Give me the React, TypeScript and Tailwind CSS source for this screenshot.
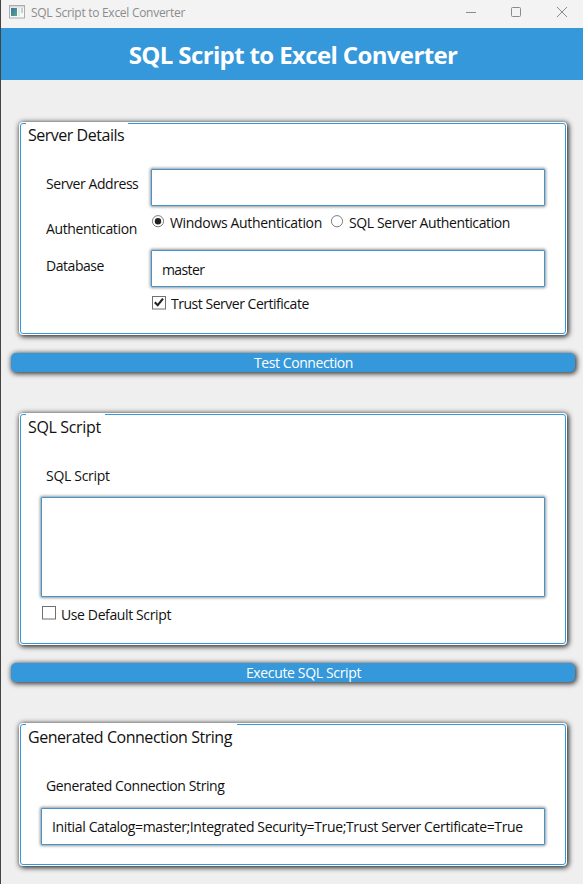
import type { ReactNode } from 'react';

const panelShadow = 'shadow-[1px_1px_5px_1px_rgba(0,0,0,0.8)]';
const fieldBox =
  'border border-[#3f96d2] bg-white rounded-[1px] shadow-[0_0_3px_1px_rgba(0,0,0,0.42)]';

function Panel({
  title,
  titleClass,
  className,
  children,
}: {
  title: string;
  titleClass: string;
  className: string;
  children: ReactNode;
}) {
  return (
    <section className={`ml-[18px] w-[548px] rounded-[4px] bg-white p-px ${panelShadow} ${className}`}>
      <div className="flex h-full w-[546px] flex-col rounded-[3px] border border-[#3498db]">
        <h2
          className={`-mt-px ml-[5px] h-[24px] shrink-0 whitespace-nowrap bg-white pl-[2px] text-[16px] ${titleClass}`}
        >
          {title}
        </h2>
        {children}
      </div>
    </section>
  );
}

function ActionButton({ label, className }: { label: string; className: string }) {
  return (
    <button
      type="button"
      className={`ml-[10px] flex h-[19px] w-[564px] shrink-0 items-center justify-center whitespace-nowrap rounded-[5px] bg-[#3498db] pl-[21px] text-[14px] leading-[19px] text-white shadow-[1px_1px_5px_1px_rgba(0,0,0,0.75)] ${className}`}
    >
      {label}
    </button>
  );
}

function Radio({ checked }: { checked?: boolean }) {
  return (
    <svg width="13" height="13" viewBox="0 0 13 13" className="shrink-0">
      <circle cx="6" cy="6.2" r="5.6" fill="#fff" stroke="#707070" strokeWidth="0.9" />
      {checked && <circle cx="6" cy="6.2" r="3.2" fill="#212121" />}
    </svg>
  );
}

function Check({ checked }: { checked?: boolean }) {
  return (
    <svg width="14" height="14" viewBox="0 0 14 14" className="shrink-0">
      <rect x="0.5" y="0.5" width="13" height="12.5" fill="#fff" stroke="#707070" />
      {checked && <path d="M2.8 6.2 L5.7 9.2 L11 2.6" fill="none" stroke="#212121" strokeWidth="2.1" />}
    </svg>
  );
}

export default function App() {
  return (
    <div className="flex h-[884px] w-[583px] flex-col overflow-hidden border-l border-[#444] bg-[#efefef] font-['Open_Sans','Noto_Sans',sans-serif] text-[14px] text-[#111]">
      <header className="flex h-[28px] shrink-0 items-start bg-[#f3f3f3]">
        <svg width="16" height="14" viewBox="0 0 16 14" className="mt-[5px] ml-[8px]">
          <defs>
            <linearGradient id="pane" x1="0" y1="0" x2="1" y2="1">
              <stop offset="0" stopColor="#3f6fa5" />
              <stop offset="1" stopColor="#58a982" />
            </linearGradient>
          </defs>
          <rect x="0.5" y="0.5" width="15" height="12.5" fill="#f8f8f8" stroke="#a9adb1" />
          <rect x="1" y="1" width="14" height="1.5" fill="#d5d8dc" />
          <rect x="2" y="3" width="6" height="8" fill="url(#pane)" />
          <rect x="9" y="3" width="2" height="8" fill="#e6e8ea" />
          <rect x="12" y="3" width="2" height="5" fill="#b9d5c6" />
        </svg>
        <span className="mt-[4px] ml-[6px] whitespace-nowrap text-[12px] leading-[18px] tracking-[-0.28px] text-[#8c8c8c]">
          SQL Script to Excel Converter
        </span>
        <svg width="104" height="12" viewBox="0 0 104 12" className="mt-[6px] mr-[14px] ml-auto" fill="none" stroke="#8a8a8a">
          <path d="M1 6.5H11" />
          <rect x="46.5" y="1.5" width="9" height="9" rx="1" />
          <path d="M92 1L102 11M102 1L92 11" />
        </svg>
      </header>

      <div className="flex h-[52px] shrink-0 justify-center bg-[#3498db]">
        <h1 className="mt-[11px] ml-[2px] whitespace-nowrap text-[24px] leading-[32px] font-bold tracking-[-0.63px] text-white">
          SQL Script to Excel Converter
        </h1>
      </div>

      <Panel
        title="Server Details"
        titleClass="w-[102px] leading-[25px] tracking-[-0.48px]"
        className="mt-[42px] h-[213px] shrink-0"
      >
        <div className="mt-[22px] flex">
          <span className="mt-[5px] ml-[25px] w-[105px] whitespace-nowrap leading-[20px] tracking-[-0.43px]">
            Server Address
          </span>
          <input className={`h-[37px] w-[394px] ${fieldBox}`} />
        </div>
        <div className="flex h-[44px]">
          <span className="mt-[13px] ml-[25px] w-[106px] whitespace-nowrap leading-[20px] tracking-[-0.36px]">
            Authentication
          </span>
          <label className="mt-[7px] flex h-[20px] w-[179px]">
            <span className="mt-[2px]">
              <Radio checked />
            </span>
            <span className="ml-[5px] whitespace-nowrap leading-[20px] tracking-[-0.33px]">
              Windows Authentication
            </span>
          </label>
          <label className="mt-[7px] flex h-[20px]">
            <span className="mt-[2px]">
              <Radio />
            </span>
            <span className="ml-[5px] whitespace-nowrap leading-[20px] tracking-[-0.4px]">
              SQL Server Authentication
            </span>
          </label>
        </div>
        <div className="flex">
          <span className="mt-[6px] ml-[25px] w-[105px] whitespace-nowrap leading-[20px] tracking-[-0.45px]">
            Database
          </span>
          <input
            defaultValue="master"
            className={`h-[37px] w-[394px] pt-[2px] pl-[10px] tracking-[-0.6px] ${fieldBox}`}
          />
        </div>
        <label className="mt-[7px] ml-[131px] flex h-[20px]">
          <span className="mt-[2px]">
            <Check checked />
          </span>
          <span className="ml-[5px] whitespace-nowrap leading-[20px] tracking-[-0.48px]">
            Trust Server Certificate
          </span>
        </label>
      </Panel>

      <ActionButton label="Test Connection" className="mt-[18px] tracking-[-0.43px]" />

      <Panel
        title="SQL Script"
        titleClass="w-[79px] leading-[26px] tracking-[-0.35px]"
        className="mt-[41px] h-[232px] shrink-0"
      >
        <span className="mt-[28px] ml-[25px] whitespace-nowrap leading-[20px] tracking-[-0.3px]">SQL Script</span>
        <textarea className={`mt-[11px] ml-[20px] h-[100px] w-[504px] shrink-0 resize-none ${fieldBox}`} />
        <label className="mt-[7px] ml-[21px] flex h-[20px]">
          <span className="mt-[2px]">
            <Check />
          </span>
          <span className="ml-[5px] mt-px whitespace-nowrap leading-[20px] tracking-[-0.38px]">
            Use Default Script
          </span>
        </label>
      </Panel>

      <ActionButton label="Execute SQL Script" className="mt-[18px] tracking-[-0.35px]" />

      <Panel
        title="Generated Connection String"
        titleClass="w-[211px] leading-[26px] tracking-[-0.46px]"
        className="mt-[41px] h-[143px] shrink-0"
      >
        <span className="mt-[28px] ml-[25px] whitespace-nowrap leading-[20px] tracking-[-0.4px]">
          Generated Connection String
        </span>
        <input
          defaultValue="Initial Catalog=master;Integrated Security=True;Trust Server Certificate=True"
          className={`mt-[12px] ml-[20px] h-[37px] w-[504px] shrink-0 pl-[10px] tracking-[-0.36px] ${fieldBox}`}
        />
      </Panel>
    </div>
  );
}
